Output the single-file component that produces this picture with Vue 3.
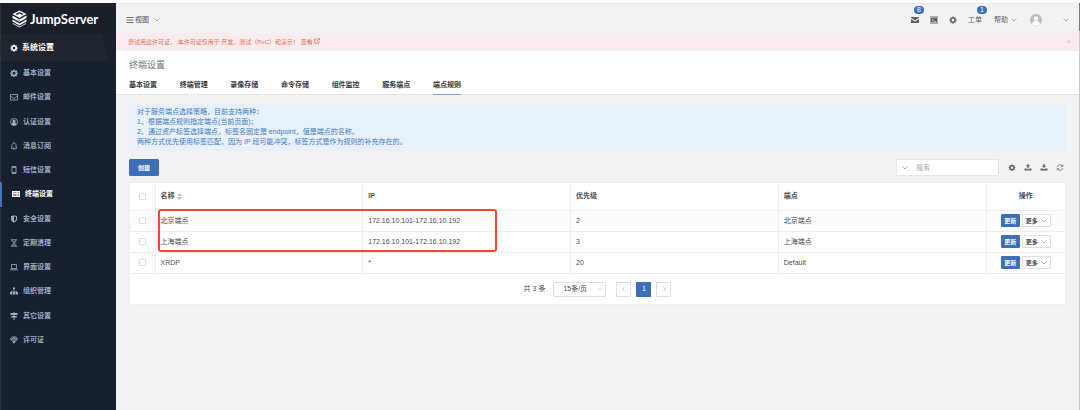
<script setup>
import { ref } from 'vue'

const gear = 'M6.8 1h2.4l.4 1.9 1.3.6 1.7-1.1 1.7 1.7-1.1 1.7.5 1.3 2 .4v2.4l-2 .4-.5 1.3 1.1 1.7-1.7 1.7-1.7-1.1-1.3.5-.4 2H6.8l-.4-2-1.3-.5-1.7 1.1-1.7-1.7 1.1-1.7-.5-1.3-2-.4V7.5l2-.4.5-1.3-1.1-1.7 1.7-1.7 1.7 1.1 1.3-.6zM8 5.7a2.9 2.9 0 1 0 0 5.8 2.9 2.9 0 0 0 0-5.8z'

const menu = [
  { name: '基本设置', fill: gear },
  { name: '邮件设置', line: 'M1 3h14v11H1zM1 6l7 5 7-5' },
  { name: '认证设置', line: 'M8 1a7 7 0 1 0 0 14A7 7 0 0 0 8 1z', fill: 'M8 3.5a3 3 0 0 1 1.8 5.4c2 .5 3 1.8 3.2 3.4a7 7 0 0 1-10 0c.2-1.6 1.2-2.9 3.2-3.4A3 3 0 0 1 8 3.5z' },
  { name: '消息订阅', line: 'M2 12.5c1.5-1.5 2-3 2-6C4 4 5.5 2 8 2s4 2 4 4.5c0 3 .5 4.5 2 6zM6.5 14.5h3M8 2V.5' },
  { name: '短信设置', line: 'M4 1h8v14H4zM4 3h8M4 13h8' },
  { name: '终端设置', fill: 'M0 2h16v12H0zM2 5v1h7V5zM2 8v1h7V8zM2 11v1h7v-1zM11 5v1h3V5zM11 8v1h3V8zM11 11v1h3v-1z', active: true },
  { name: '安全设置', fill: 'M8 1l6 1v6c0 3.5-3 6-6 7.5C5 14 2 11.5 2 8V2zM8 3v10c2-1.3 4-3 4-5V3.5z' },
  { name: '定期清理', line: 'M2 1.5h12M2 14.5h12M4 2c0 4 3 4.5 3 6s-3 2-3 6M12 2c0 4-3 4.5-3 6s3 2 3 6', fill: 'M5 5h6L8 8zM5 13l3-3 3 3z' },
  { name: '界面设置', line: 'M3 3h10v8H3zM0 13.5h16' },
  { name: '组织管理', fill: 'M6 1h4v4H6zM7.5 5h1v3h5.5v2h2v5h-5v-5h2V9.2H8.7V10H10v5H6v-5h1.3v-.8H3V10h2v5H0v-5h2V8h5.5z' },
  { name: '其它设置', fill: 'M7 0h2v2h6v4H9v2h4.5v3H9v5H7v-5H2.5V8H7V6H1V2h6z' },
  { name: '许可证', line: 'M4 2h8l3 4-7 8.5L1 6zM1 6h14M5.5 6L8 14l2.5-8L8 2z' },
]

const tabs = ['基本设置', '终端管理', '录像存储', '命令存储', '组件监控', '服务端点', '端点规则']
const rows = [
  { name: '北京端点', ip: '172.16.10.101-172.16.10.192', priority: 2, endpoint: '北京端点' },
  { name: '上海端点', ip: '172.16.10.101-172.16.10.192', priority: 3, endpoint: '上海端点' },
  { name: 'XRDP', ip: '*', priority: 20, endpoint: 'Default' },
]
const tools = [
  { label: '设置', fill: gear },
  { label: '上传', fill: 'M8 0l5 5H9.5v5h-3V5H3zM0 10h4.5v2h7v-2H16v5H0z' },
  { label: '下载', fill: 'M6.5 0h3v4H13L8 9 3 4h3.5zM0 10h4.5l2 1.5h3l2-1.5H16v5H0z' },
  { label: '刷新', line: 'M1.5 7A6.5 6.5 0 0 1 13.5 4.5M14.5 1v4.5H10M14.5 9A6.5 6.5 0 0 1 2.5 11.5M1.5 15v-4.5H6' },
]
const search = ref('')
</script>

<template>
  <div class="page">
    <aside class="side">
      <div class="brand">
        <svg class="logo" viewBox="0 0 32 36" aria-hidden="true">
          <path d="M16 1l14 7-14 8L2 8z" fill="#fff" />
          <path d="M8 8l8-4 8 4-3 2-5-3-5 3z" fill="#1c222e" />
          <path d="M2 11l14 8 14-8v5l-14 8-14-8z" fill="#fff" />
          <path d="M2 19l14 8 14-8v4l-14 8-14-8z" fill="#fff" />
          <path d="M3 26l13 7 13-7v2l-13 7-13-7z" fill="#d5d8dc" />
          <path d="M5 11l10 6M11 19l9 5M19 14l8-4" stroke="#1c222e" stroke-width="1" />
        </svg>
        <span>JumpServer</span>
      </div>
      <div class="section">
        <svg class="ico" viewBox="0 0 16 17" aria-hidden="true"><path :d="gear" class="fill" fill-rule="evenodd" /></svg>
        系统设置
      </div>
      <nav class="menu">
        <a v-for="m in menu" :key="m.name" href="#" :class="{ active: m.active }">
          <svg class="ico" viewBox="0 0 16 16" aria-hidden="true">
            <path v-if="m.line" :d="m.line" class="line" />
            <path v-if="m.fill" :d="m.fill" class="fill" fill-rule="evenodd" />
          </svg>
          {{ m.name }}
        </a>
      </nav>
    </aside>

    <div class="body">
      <header class="top">
        <button class="plain view">
          <svg class="ico" viewBox="0 0 16 16" aria-hidden="true"><path d="M1 3h14M1 8h14M1 13h14" class="line" /></svg>
          视图
          <svg class="chev" viewBox="0 0 12 8" aria-hidden="true"><path d="M1 1l5 5 5-5" /></svg>
        </button>
        <div class="actions">
          <button class="plain act" aria-label="消息">
            <svg class="ico" viewBox="0 0 16 16" aria-hidden="true"><path d="M0 2h16v1.5L8 9 0 3.5zM0 6l8 5 8-5v8H0z" class="fill" /></svg>
            <span class="badge">8</span>
          </button>
          <button class="plain act" aria-label="终端">
            <svg class="ico" viewBox="0 0 16 16" aria-hidden="true"><path d="M0 1h16v14H0zM1 2v12h14V2zM2 3h12v10H2zM4 5v1l2.5 2L4 10v1.5L8 8zM8 10v1.2h4V10z" class="fill" fill-rule="evenodd" /></svg>
          </button>
          <button class="plain act" aria-label="设置">
            <svg class="ico" viewBox="0 0 16 17" aria-hidden="true"><path :d="gear" class="fill" fill-rule="evenodd" /></svg>
          </button>
          <button class="plain act">工单<span class="badge">1</span></button>
          <button class="plain act help">帮助
            <svg class="chev" viewBox="0 0 12 8" aria-hidden="true"><path d="M1 1l5 5 5-5" /></svg>
          </button>
          <button class="plain act user" aria-label="用户">
            <svg class="avatar" viewBox="0 0 26 26" aria-hidden="true">
              <circle cx="13" cy="13" r="13" fill="#bdbdbd" />
              <circle cx="13" cy="10" r="5" fill="#fff" />
              <path d="M4 22c1-5 5-7 9-7s8 2 9 7c-5 4-13 4-18 0z" fill="#fff" />
            </svg>
            <svg class="chev" viewBox="0 0 12 8" aria-hidden="true"><path d="M1 1l5 5 5-5" /></svg>
          </button>
        </div>
      </header>

      <div class="alert">
        <p>测试用途许可证， 本许可证仅用于 开发、测试（PoC）和演示！
          <a href="#">查看
            <svg viewBox="0 0 16 16" aria-hidden="true"><path d="M9 3H2v11h11V8M10 1h5v5M15 1L7 9" /></svg>
          </a>
        </p>
        <button class="plain close" aria-label="关闭">×</button>
      </div>

      <div class="heading">
        <h1>终端设置</h1>
        <nav class="tabs">
          <a v-for="(t, i) in tabs" :key="t" href="#" :class="{ on: i === 6 }">{{ t }}</a>
        </nav>
      </div>

      <main>
        <div class="info">
          <p>对于服务端点选择策略，目前支持两种：</p>
          <p>1、根据端点规则指定端点(当前页面)；</p>
          <p>2、通过资产标签选择端点，标签名固定是 endpoint，值是端点的名称。</p>
          <p>两种方式优先使用标签匹配，因为 IP 段可能冲突，标签方式是作为规则的补充存在的。</p>
        </div>

        <div class="bar">
          <button class="primary create">创建</button>
          <div class="right">
            <label class="search">
              <svg class="chev" viewBox="0 0 12 8" aria-hidden="true"><path d="M1 1l5 5 5-5" /></svg>
              <input v-model="search" type="text" placeholder="搜索" aria-label="搜索" />
            </label>
            <div class="tools">
              <button v-for="t in tools" :key="t.label" class="plain" :aria-label="t.label">
                <svg class="ico" viewBox="0 0 16 16" aria-hidden="true">
                  <path v-if="t.line" :d="t.line" class="line" />
                  <path v-if="t.fill" :d="t.fill" class="fill" fill-rule="evenodd" />
                </svg>
              </button>
            </div>
          </div>
        </div>

        <section class="card">
          <table>
            <colgroup><col class="c-check" /><col /><col /><col /><col /><col class="c-act" /></colgroup>
            <thead>
              <tr>
                <th class="mid"><input type="checkbox" aria-label="全选" /></th>
                <th>名称
                  <svg class="sort" viewBox="0 0 10 14" aria-hidden="true"><path d="M5 0l5 6H0zM5 14L0 8h10z" /></svg>
                </th>
                <th>IP</th>
                <th>优先级</th>
                <th>端点</th>
                <th class="mid">操作</th>
              </tr>
            </thead>
            <tbody>
              <tr v-for="r in rows" :key="r.name">
                <td class="mid"><input type="checkbox" :aria-label="r.name" /></td>
                <td>{{ r.name }}</td>
                <td>{{ r.ip }}</td>
                <td>{{ r.priority }}</td>
                <td>{{ r.endpoint }}</td>
                <td>
                  <div class="ops">
                    <button class="primary small">更新</button>
                    <button class="more">更多
                      <svg class="chev" viewBox="0 0 12 8" aria-hidden="true"><path d="M1 1l5 5 5-5" /></svg>
                    </button>
                  </div>
                </td>
              </tr>
            </tbody>
          </table>
          <div class="mark"></div>
          <div class="pager">
            <span>共 3 条</span>
            <span class="size">
              <select aria-label="每页条数"><option>15条/页</option></select>
              <svg class="chev" viewBox="0 0 12 8" aria-hidden="true"><path d="M1 1l5 5 5-5" /></svg>
            </span>
            <div class="pages">
              <button aria-label="上一页"><svg viewBox="0 0 8 12" aria-hidden="true"><path d="M6 1L1 6l5 5" /></svg></button>
              <button class="cur">1</button>
              <button aria-label="下一页"><svg viewBox="0 0 8 12" aria-hidden="true"><path d="M2 1l5 5-5 5" /></svg></button>
            </div>
          </div>
        </section>
      </main>
    </div>
  </div>
</template>

<style>
body {
  background: #fff;
}
</style>

<style scoped>
* {
  box-sizing: border-box;
}
.page {
  display: flex;
  min-height: 100vh;
  border-top: 3px solid #fff;
  font: 7px/10px "Liberation Sans", "Noto Sans CJK SC", sans-serif;
  color: #4a4d51;
}
button, input, select {
  font: inherit;
  color: inherit;
  margin: 0;
  padding: 0;
}
a {
  color: inherit;
  text-decoration: none;
}
p, h1 {
  margin: 0;
}
.plain {
  display: flex;
  align-items: center;
  border: 0;
  background: none;
}
.ico {
  width: 8px;
  height: 8px;
  flex: none;
}
.fill {
  fill: currentColor;
}
.line {
  fill: none;
  stroke: currentColor;
  stroke-width: 1.6;
}
.chev {
  width: 6px;
  height: 4px;
  flex: none;
  fill: none;
  stroke: #96989c;
  stroke-width: 1.5;
}

.side {
  width: 116px;
  flex: none;
  background: #181f2e;
  border-left: 1px solid #263040;
  color: #a0adc6;
  font-weight: 700;
}
.brand {
  display: flex;
  align-items: center;
  gap: 2px;
  height: 31px;
  padding-left: 10px;
  background: #1a1f2a;
  color: #fff;
  font: 700 13px/18px Lato, sans-serif;
}
.logo {
  width: 17px;
  height: 18px;
}
.section {
  display: flex;
  align-items: center;
  gap: 4px;
  height: 27px;
  padding-left: 9px;
  background: linear-gradient(75deg, #21252e 0 88%, #1a202c 88%);
  color: #fff;
  font-size: 8px;
}
.menu {
  display: grid;
  grid-auto-rows: 1fr;
  height: 291px;
}
.menu a {
  display: flex;
  align-items: center;
  gap: 5px;
  margin-left: -1px;
  padding-left: 10px;
}
.menu .active {
  color: #fff;
  border-left: 2px solid #4471b8;
}

.body {
  flex: 1;
  min-width: 0;
  background: #f2f2f2;
  border-right: 1px solid;
  border-image: linear-gradient(#7a7a7a 29px, #c9c9c9 29px) 1;
}
.top {
  display: flex;
  justify-content: space-between;
  align-items: center;
  height: 30px;
  padding: 2px 10px 0 10px;
  border-top: 1px solid #e9e9e9;
}
.view {
  gap: 1px;
}
.view .chev {
  margin-left: 4px;
}
.actions {
  display: flex;
  align-items: center;
  gap: 11px;
  color: #5f6266;
}
.act {
  position: relative;
  height: 10px;
}
.help {
  gap: 3px;
  margin-left: 1px;
}
.badge {
  position: absolute;
  left: calc(100% - 5px);
  top: -9px;
  width: 10px;
  height: 8px;
  border-radius: 4px;
  background: #3d6fb9;
  color: #fff;
  line-height: 8px;
  text-align: center;
}
.user {
  gap: 21px;
  margin-left: 2px;
}
.avatar {
  width: 12px;
  height: 12px;
}
.alert {
  display: flex;
  justify-content: space-between;
  align-items: center;
  height: 18px;
  padding: 0 8px 0 12px;
  background: #faecee;
  color: #e06e53;
  font-size: 6px;
}
.alert svg {
  width: 6px;
  height: 6px;
  fill: none;
  stroke: currentColor;
  stroke-width: 2;
}
.close {
  color: #cfc3c7;
  font-size: 8px;
}
.heading {
  padding: 7px 13px 0;
  background: #fff;
  border-bottom: 1px solid #e4e5e8;
}
h1 {
  color: #727477;
  font-size: 9px;
  font-weight: 400;
  line-height: 14px;
}
.tabs {
  display: flex;
  justify-content: space-between;
  max-width: 332px;
}
.tabs a {
  padding: 8px 0 4px;
  margin-bottom: -1px;
  border-bottom: 1px solid transparent;
  color: #36383b;
  font-weight: 700;
}
.tabs .on {
  border-color: #7d9fd3;
}

main {
  padding: 8px 13px 0;
}
.info {
  padding: 4px 8px;
  background: #e8f1f9;
  color: #3f7bc5;
}
.bar {
  display: flex;
  justify-content: space-between;
  align-items: center;
  margin: 8px 0 6px;
}
.primary {
  border: 1px solid #3d6fb9;
  border-radius: 1px;
  background: #3d6fb9;
  color: #fff;
  font-weight: 700;
}
.create {
  width: 30px;
  height: 17px;
  font-size: 6px;
}
.right {
  display: flex;
  align-items: center;
  gap: 9px;
}
.search {
  display: flex;
  align-items: center;
  gap: 8px;
  width: 103px;
  height: 17px;
  padding: 0 5px;
  border: 1px solid #e4e6ea;
  background: #fff;
}
.search input {
  flex: 1;
  min-width: 0;
  border: 0;
  outline: 0;
  background: none;
}
.search input::placeholder {
  color: #a9acb1;
}
.tools {
  display: flex;
  gap: 8px;
  padding-right: 2px;
  color: #5f6164;
}
.tools .ico {
  width: 8px;
  height: 7px;
}
.card {
  position: relative;
  background: #fff;
  border: 1px solid #ebeef5;
}
table {
  width: 100%;
  table-layout: fixed;
  border-collapse: collapse;
}
.c-check {
  width: 25px;
}
.c-act {
  width: 79px;
}
th, td {
  height: 21px;
  padding: 0 5px;
  border-bottom: 1px solid #ebeef5;
  border-right: 1px solid #ebeef5;
  text-align: left;
}
th {
  height: 27px;
}
th:last-child, td:last-child {
  border-right: 0;
}
tbody tr:first-child {
  background: #fcfcfd;
}
th.mid, td.mid {
  text-align: center;
  padding: 0;
}
input[type="checkbox"] {
  appearance: none;
  display: block;
  width: 7px;
  height: 7px;
  margin: 0 auto;
  border: 1px solid #dcdfe6;
  border-radius: 1px;
  background: #fff;
}
.sort {
  width: 5px;
  height: 7px;
  margin-left: 1px;
  fill: #b9bcc4;
  vertical-align: middle;
}
.ops {
  display: flex;
  justify-content: center;
  gap: 2px;
}
.small {
  width: 19px;
  height: 13px;
  font-size: 6px;
  line-height: 10px;
}
.more {
  display: flex;
  align-items: center;
  justify-content: center;
  gap: 3px;
  width: 29px;
  height: 13px;
  border: 1px solid #dcdfe6;
  border-radius: 1px;
  background: #fff;
  font-size: 6px;
  font-weight: 700;
}
.mark {
  position: absolute;
  left: 28px;
  top: 26px;
  width: 339px;
  height: 43px;
  border: 2px solid #ea4d2b;
  border-radius: 3px;
}
.pager {
  display: flex;
  align-items: center;
  justify-content: center;
  gap: 8px;
  padding: 8px 0 7px;
}
.size {
  position: relative;
  display: flex;
  align-items: center;
}
.size select {
  width: 53px;
  height: 15px;
  padding-left: 9px;
  appearance: none;
  border: 1px solid #dcdfe6;
  border-radius: 1px;
  background: #fff;
}
.size .chev {
  position: absolute;
  right: 4px;
  width: 4px;
  height: 3px;
}
.pages {
  display: flex;
  gap: 5px;
  margin-left: 2px;
}
.pages button {
  display: flex;
  align-items: center;
  justify-content: center;
  width: 15px;
  height: 15px;
  border: 1px solid #dcdfe6;
  background: #fff;
}
.pages svg {
  width: 4px;
  height: 6px;
  fill: none;
  stroke: #b5b8be;
  stroke-width: 1.5;
}
.pages .cur {
  border-color: #3d6fb9;
  background: #3d6fb9;
  color: #fff;
}
</style>
